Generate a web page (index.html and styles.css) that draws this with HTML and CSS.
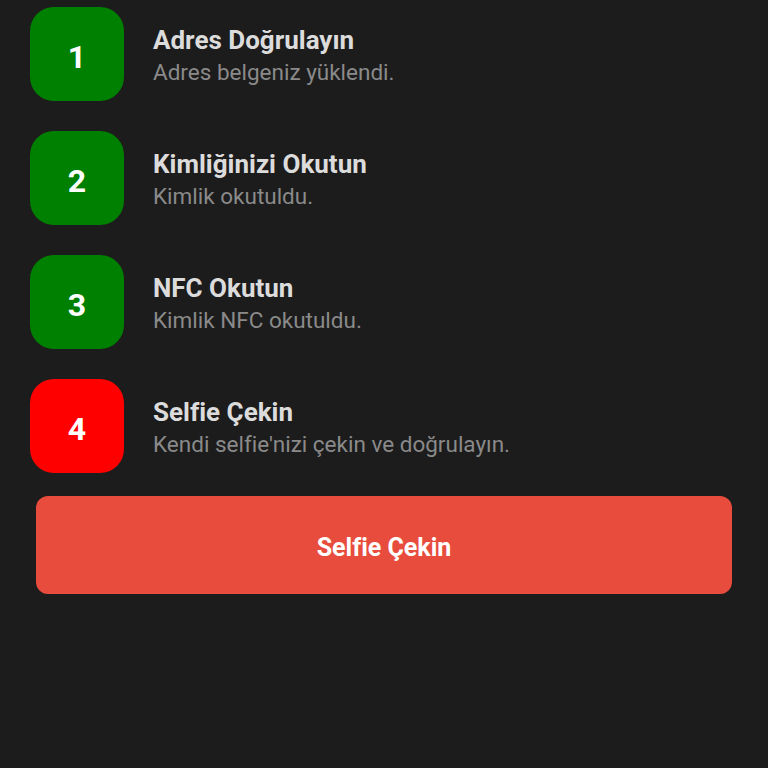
FILE: index.html
```html
<!DOCTYPE html>
<html lang="tr">
<head>
<meta charset="utf-8">
<title>Doğrulama</title>
<link rel="stylesheet" href="styles.css">
</head>
<body>
<main class="page">
  <ul class="steps">
    <li class="step">
      <div class="badge badge-done">1</div>
      <div class="step-text">
        <div class="step-title">Adres Doğrulayın</div>
        <div class="step-sub">Adres belgeniz yüklendi.</div>
      </div>
    </li>
    <li class="step">
      <div class="badge badge-done">2</div>
      <div class="step-text">
        <div class="step-title">Kimliğinizi Okutun</div>
        <div class="step-sub">Kimlik okutuldu.</div>
      </div>
    </li>
    <li class="step">
      <div class="badge badge-done">3</div>
      <div class="step-text">
        <div class="step-title">NFC Okutun</div>
        <div class="step-sub">Kimlik NFC okutuldu.</div>
      </div>
    </li>
    <li class="step">
      <div class="badge badge-todo">4</div>
      <div class="step-text">
        <div class="step-title">Selfie Çekin</div>
        <div class="step-sub">Kendi selfie'nizi çekin ve doğrulayın.</div>
      </div>
    </li>
  </ul>
  <button class="action" type="button">Selfie Çekin</button>
</main>
</body>
</html>
```

FILE: styles.css
```css
html, body {
  margin: 0;
  padding: 0;
  background: #1c1c1c;
  height: 100%;
}
body {
  font-family: Roboto, "Noto Sans", "Liberation Sans", sans-serif;
}
.page {
  padding: 7px 36px 0 30px;
  display: flex;
  flex-direction: column;
}
.steps {
  list-style: none;
  margin: 0;
  padding: 0;
  display: flex;
  flex-direction: column;
  gap: 30px;
}
.step {
  display: flex;
  align-items: flex-start;
  gap: 29px;
}
.badge {
  box-sizing: border-box;
  width: 94px;
  height: 94px;
  padding-top: 5px;
  border-radius: 24px;
  display: flex;
  align-items: center;
  justify-content: center;
  color: #ffffff;
  font-weight: 700;
  font-size: 32px;
  flex-shrink: 0;
}
.badge-done { background: #008000; }
.badge-todo { background: #ff0000; }
.step-text {
  display: flex;
  flex-direction: column;
  gap: 1px;
  padding-top: 17px;
}
.step-title {
  color: #dcdcdc;
  font-size: 26px;
  font-weight: 700;
  line-height: 32px;
}
.step-sub {
  color: #8a8a8a;
  font-size: 22.5px;
  line-height: 30px;
}
.action {
  box-sizing: border-box;
  margin: 23px 0 0 6px;
  height: 98px;
  padding: 4px 0 0;
  border: none;
  border-radius: 12px;
  background: #e74c3c;
  color: #ffffff;
  font-family: Roboto, "Noto Sans", "Liberation Sans", sans-serif;
  font-size: 25px;
  font-weight: 700;
}
```
